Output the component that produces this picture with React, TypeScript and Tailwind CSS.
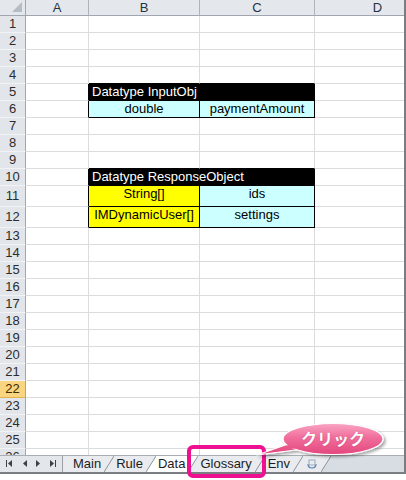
import React from "react";

const cols = ["A", "B", "C", "D"];

type Pair = { b: string; bBg: string; c: string; cBg: string };

const titles: Record<number, string> = {
  5: "Datatype InputObj",
  10: "Datatype ResponseObject",
};

const pairs: Record<number, Pair> = {
  6: { b: "double", bBg: "bg-[#ccffff]", c: "paymentAmount", cBg: "bg-[#ccffff]" },
  11: { b: "String[]", bBg: "bg-[#ffff00]", c: "ids", cBg: "bg-[#ccffff]" },
  12: { b: "IMDynamicUser[]", bBg: "bg-[#ffff00]", c: "settings", cBg: "bg-[#ccffff]" },
};

const rows = Array.from({ length: 26 }, (_, i) => i + 1);

function SheetRow({ n }: { n: number }) {
  const tall = n === 11 || n === 12;
  const boxed = !!titles[n] || !!pairs[n];
  const aboveBox = n === 4 || n === 9;
  const active = n === 22;
  const pair = pairs[n];
  const align = tall ? "items-end pb-[3px]" : "items-center";

  return (
    <div className={`flex shrink-0 ${tall ? "h-[21px]" : "h-[17px]"}`}>
      <div
        className={`flex w-[26px] shrink-0 items-center justify-center border-r border-b border-r-[#9fa6af] text-[13px] ${
          active ? "border-b-[#e3b04f] bg-[#f8d57e] text-[#3a2a00]" : "border-b-[#f1f3f5] bg-[#e2e6eb] text-[#2c2c2c]"
        }`}
      >
        {n}
      </div>
      <div
        className={`w-[63px] shrink-0 border-r border-b border-b-[#dadcdd] ${
          boxed ? "border-r-black" : "border-r-[#dadcdd]"
        }`}
      />
      {titles[n] ? (
        <div className="flex w-[226px] shrink-0 items-center border-r border-b border-black bg-black pl-[3px] text-[13px] text-white">
          {titles[n]}
        </div>
      ) : pair ? (
        <>
          <div
            className={`flex w-[111px] shrink-0 justify-center border-r border-b border-black text-[13px] text-black ${align} ${pair.bBg}`}
          >
            {pair.b}
          </div>
          <div
            className={`flex w-[115px] shrink-0 justify-center border-r border-b border-black text-[13px] text-black ${align} ${pair.cBg}`}
          >
            {pair.c}
          </div>
        </>
      ) : (
        <>
          <div
            className={`w-[111px] shrink-0 border-r border-b border-r-[#dadcdd] ${
              aboveBox ? "border-b-black" : "border-b-[#dadcdd]"
            }`}
          />
          <div
            className={`w-[115px] shrink-0 border-r border-b border-r-[#dadcdd] ${
              aboveBox ? "border-b-black" : "border-b-[#dadcdd]"
            }`}
          />
        </>
      )}
      <div className="w-[126px] shrink-0 border-r border-b border-[#dadcdd]" />
    </div>
  );
}

function Slant({ left, right }: { left: string; right: string }) {
  return (
    <svg width="10" height="16" viewBox="0 0 10 16" className="shrink-0">
      <rect x="0" y="0" width="10" height="16" fill={left} />
      <polygon points="10,0 10,16 0,16" fill={right} />
      <line x1="0" y1="16" x2="10" y2="0" stroke="#8d949c" strokeWidth="1" />
    </svg>
  );
}

const TAB = "#e9ebee";
const BAR = "#d8dde3";

export default function App() {
  return (
    <div className="relative h-[480px] w-[406px] overflow-hidden bg-white font-['Liberation_Sans',Arial,sans-serif]">
      <div className="w-[406px] border-r-2 border-b-2 border-[#7a7d82]">
        {/* sheet */}
        <div className="h-[455px] overflow-hidden">
          <div className="flex h-[16px] shrink-0">
            <div className="relative w-[26px] shrink-0 border-r border-b border-r-[#9fa6af] border-b-[#9fa6af] bg-[#e4e7ec]">
              <svg width="12" height="12" viewBox="0 0 12 12" className="absolute right-[2px] bottom-[2px]">
                <polygon points="11,1 11,11 1,11" fill="#b6bcc4" />
              </svg>
            </div>
            {cols.map((c, i) => (
              <div
                key={c}
                className={`flex shrink-0 items-center justify-center border-r border-b border-r-[#aeb4bc] border-b-[#9fa6af] bg-[#e4e7ec] text-[13px] text-[#27323f] ${
                  i === 0 ? "w-[63px]" : i === 1 ? "w-[111px]" : i === 2 ? "w-[115px]" : "w-[126px]"
                }`}
              >
                {c}
              </div>
            ))}
          </div>
          {rows.map((n) => (
            <SheetRow key={n} n={n} />
          ))}
        </div>

        {/* sheet tabs */}
        <div className="flex h-[17px] items-stretch border-t border-[#a9aeb4] bg-[#d8dde3] text-[13px] text-[#1c1c1c]">
          <div className="flex w-[63px] shrink-0 items-center border-r border-[#9aa0a8] bg-[#e3e6ea]">
            <svg width="62" height="16" viewBox="0 0 62 16">
              <rect x="6" y="4" width="1" height="7" fill="#3d4148" />
              <polygon points="12,4 12,11 8,7.5" fill="#3d4148" />
              <polygon points="27,4 27,11 23,7.5" fill="#3d4148" />
              <polygon points="36,4 36,11 40,7.5" fill="#3d4148" />
              <polygon points="50,4 50,11 54,7.5" fill="#3d4148" />
              <rect x="55" y="4" width="1" height="7" fill="#3d4148" />
            </svg>
          </div>
          <div className="flex items-center bg-[#e9ebee] pr-[3px] pl-[10px]">Main</div>
          <Slant left={TAB} right={TAB} />
          <div className="flex items-center bg-[#e9ebee] pr-[3px] pl-[2px]">Rule</div>
          <Slant left={TAB} right="#ffffff" />
          <div className="flex items-center bg-white pr-[3px] pl-[2px]">Data</div>
          <Slant left="#ffffff" right={TAB} />
          <div className="flex items-center bg-[#e9ebee] pr-[3px] pl-[2px]">Glossary</div>
          <Slant left={TAB} right={TAB} />
          <div className="flex items-center bg-[#e9ebee] pr-[3px] pl-[3px]">Env</div>
          <Slant left={TAB} right={TAB} />
          <div className="flex w-[18px] items-center justify-center bg-[#e9ebee]">
            <svg width="12" height="12" viewBox="0 0 12 12">
              <path d="M2 6 Q2 10 6 10 Q10 10 10 6" fill="none" stroke="#5a7fb0" strokeWidth="1.2" />
              <rect x="3" y="2" width="6" height="5" fill="none" stroke="#8a9bb5" strokeWidth="0.8" />
            </svg>
          </div>
          <Slant left={TAB} right={BAR} />
        </div>
      </div>

      {/* highlight frame */}
      <div className="absolute top-[445px] left-[187px] h-[33px] w-[79px] rounded-[6px] border-4 border-[#ee1090]" />

      {/* callout */}
      <svg width="150" height="46" viewBox="0 0 150 46" className="absolute top-[416px] left-[248px]">
        <defs>
          <linearGradient id="bubble" gradientUnits="userSpaceOnUse" x1="0" y1="8" x2="0" y2="38">
            <stop offset="0" stopColor="#f9a3c2" />
            <stop offset="0.45" stopColor="#f06e9c" />
            <stop offset="1" stopColor="#e4487d" />
          </linearGradient>
          <filter id="shadow" x="-20%" y="-30%" width="140%" height="170%">
            <feDropShadow dx="2" dy="2" stdDeviation="1.5" floodColor="#000" floodOpacity="0.35" />
          </filter>
        </defs>
        <g filter="url(#shadow)">
          <polygon points="43,27 9,39 55,33" fill="url(#bubble)" stroke="#ffffff" strokeWidth="1.2" strokeLinejoin="round" />
          <ellipse cx="85" cy="23" rx="50" ry="15.5" fill="url(#bubble)" stroke="#ffffff" strokeWidth="1.2" />
          <polygon points="44,27.5 30,33 54,32.5" fill="url(#bubble)" />
        </g>
      </svg>
      <div className="absolute top-[424px] left-[283px] flex h-[28px] w-[100px] items-center justify-center font-['Noto_Sans_CJK_JP',sans-serif] text-[16px] font-bold text-white [text-shadow:0_0_1px_rgba(150,20,70,0.6)]">
        クリック
      </div>
    </div>
  );
}
